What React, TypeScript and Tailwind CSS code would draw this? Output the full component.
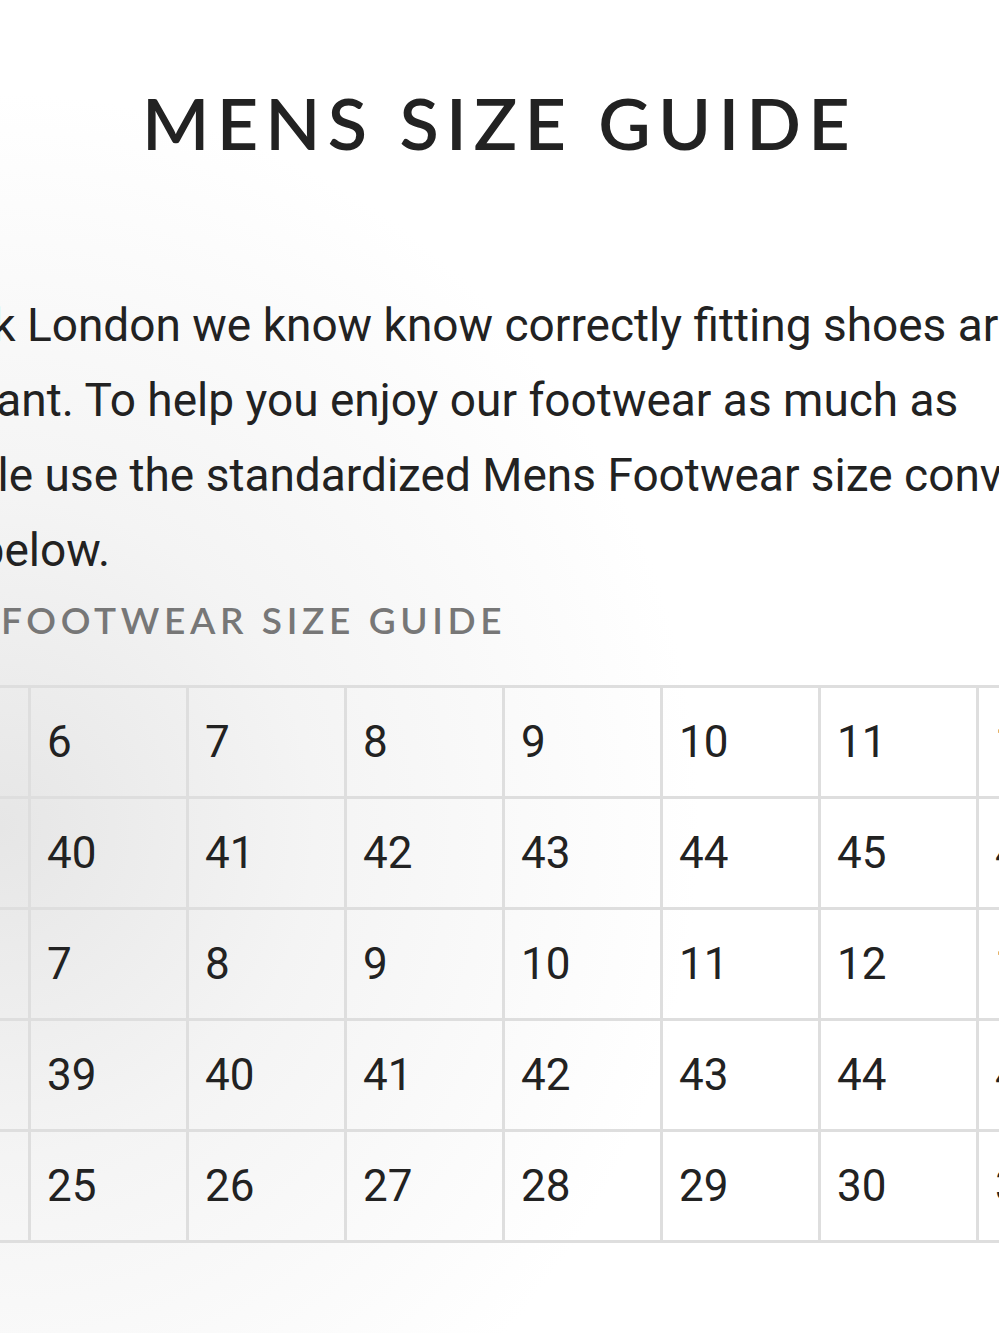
const rows: { label: string; values: number[] }[] = [
  { label: "UK", values: [6, 7, 8, 9, 10, 11, 12] },
  { label: "EU", values: [40, 41, 42, 43, 44, 45, 46] },
  { label: "US", values: [7, 8, 9, 10, 11, 12, 13] },
  { label: "EU", values: [39, 40, 41, 42, 43, 44, 45] },
  { label: "CM", values: [25, 26, 27, 28, 29, 30, 31] },
];

export default function App() {
  return (
    <div className="relative h-[1333px] w-full overflow-hidden bg-[radial-gradient(ellipse_70%_55%_at_0%_62%,#e6e6e6_0%,#f4f4f4_45%,#ffffff_100%)]">
      <h1 className="pt-[86px] text-center font-['Lato',sans-serif] text-[72px] font-semibold leading-none tracking-[0.1em] text-[#222]">
        MENS SIZE GUIDE
      </h1>

      <div className="-ml-[139px] mt-[130px]">
        <p className="whitespace-nowrap font-['Roboto',sans-serif] text-[46px] leading-[75px] text-[#222]">
          At Lock London we know know correctly fitting shoes are
          <br />
          important. To help you enjoy our footwear as much as
          <br />
          possible use the standardized Mens Footwear size conversion
          <br />
          chart below.
        </p>

        <h2 className="ml-[140px] mt-[13px] font-['Lato',sans-serif] text-[37px] font-semibold leading-none tracking-[0.125em] text-[#777]">
          FOOTWEAR SIZE GUIDE
        </h2>

        <table className="ml-[27px] mt-[47px] w-[1246px] table-fixed border-collapse font-['Roboto',sans-serif] text-[44px] text-[#222]">
          <colgroup>
            <col className="w-[140px]" />
            {rows[0].values.map((_, i) => (
              <col key={i} className="w-[158px]" />
            ))}
          </colgroup>
          <tbody>
            {rows.map((r, ri) => (
              <tr key={ri} className="h-[111px]">
                <td className="border-[3px] border-[#dedede] pl-[16px] align-middle">{r.label}</td>
                {r.values.map((v, vi) => (
                  <td key={vi} className="border-[3px] border-[#dedede] pl-[16px] align-middle">
                    {v}
                  </td>
                ))}
              </tr>
            ))}
          </tbody>
        </table>
      </div>
    </div>
  );
}
